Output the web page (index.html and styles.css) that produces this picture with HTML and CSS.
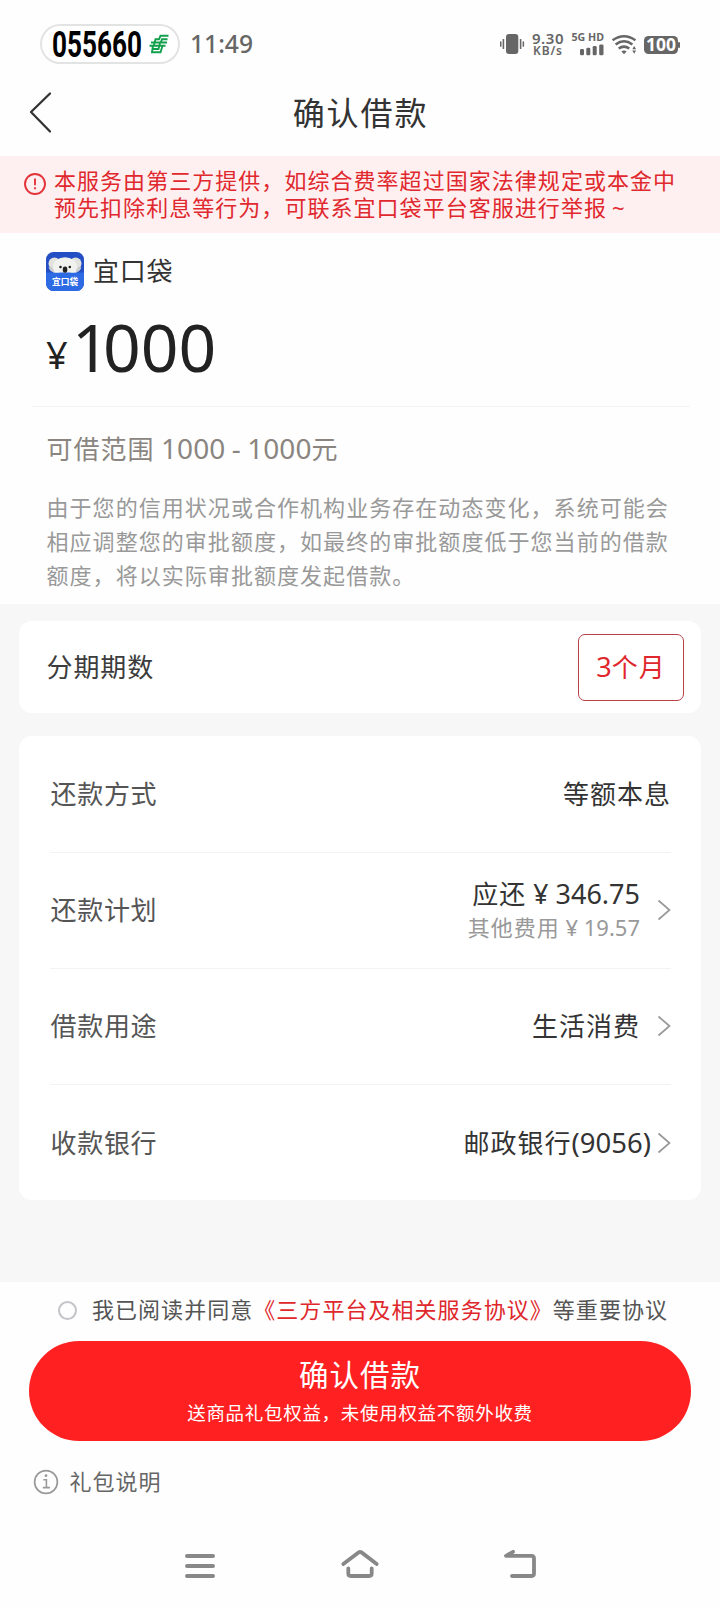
FILE: index.html
```html
<!DOCTYPE html>
<html lang="zh-CN">
<head>
<meta charset="utf-8">
<title>确认借款</title>
<link rel="stylesheet" href="styles.css">
</head>
<body>
<div class="screen">
  <header class="status">
    <div class="pill">
      <svg width="140" height="40" viewBox="0 0 140 40">
        <text class="pill-number" x="12" y="33" textLength="90" lengthAdjust="spacingAndGlyphs">055660</text>
        <g fill="none" stroke="#13a04c" stroke-width="1.900">
          <path d="M128.500 11.800H120.500L119 15.300H115.500L113.800 21.500"/>
          <path d="M127.500 15.300H122L120.800 18.500"/>
          <path d="M111 18.500H127M109.500 21.800H125.500"/>
          <path d="M113 21.500L112 28.200H120.500L122.500 22M113 25H118.500L120 19"/>
        </g>
      </svg>
    </div>
    <svg class="clock" width="64" height="40" viewBox="0 0 64 40"><text class="clock-text" x="0" y="29" textLength="63" lengthAdjust="spacingAndGlyphs">11:49</text></svg>
    <svg class="indicators" width="184" height="30" viewBox="498 29 184 30">
      <g fill="#666">
        <rect x="506" y="34" width="12.300" height="20" rx="3"/>
        <rect x="502.600" y="39" width="1.600" height="10" rx=".6"/><rect x="500" y="41.300" width="1.500" height="5.500" rx=".6"/>
        <rect x="519.800" y="39" width="1.600" height="10" rx=".6"/><rect x="522.600" y="41.300" width="1.500" height="5.500" rx=".6"/>
        <text class="speed" x="532" y="43.500" textLength="31.500">9.30</text>
        <text class="unit" x="533" y="55.300" textLength="29">KB/s</text>
        <text class="network" x="571.500" y="41.300" textLength="32.500" lengthAdjust="spacingAndGlyphs">5G HD</text>
        <rect x="580" y="49" width="4" height="6.200" rx="1.300"/><rect x="586.300" y="47.800" width="4" height="7.400" rx="1.300"/>
        <rect x="592.700" y="46" width="4" height="9.200" rx="1.300"/><rect x="599.200" y="44.400" width="4.300" height="10.800" rx="1.300"/>
        <path d="M621.300 51.300Q624 49.700 626.700 51.300L624 54.200Z"/>
        <path d="M632.300 49.200L634.200 46L636.100 49.200ZM632.300 50.600L634.200 53.800L636.100 50.600Z"/>
        <rect x="644" y="36" width="34" height="18" rx="4.500"/><rect x="678" y="42" width="2" height="6" rx="1"/>
      </g>
      <g fill="none" stroke="#666" stroke-width="2.500">
        <path d="M612.600 40.300Q624 32.300 635.400 40.300"/><path d="M615.600 44.400Q624 38.100 632.400 44.400"/><path d="M618.700 48.600Q624 44.700 629.300 48.600"/>
      </g>
      <text class="battery" x="646" y="51.200" textLength="30" lengthAdjust="spacingAndGlyphs">100</text>
    </svg>
  </header>

  <nav class="titlebar">
    <svg class="back" width="26" height="42" viewBox="0 0 26 42"><path d="M22 1.500L3 20L22 39.500" fill="none" stroke="#333" stroke-width="2.300" stroke-linecap="round" stroke-linejoin="round"/></svg>
    <h1 class="title">确认借款</h1>
  </nav>

  <div class="notice">
    <svg class="notice-icon" width="24" height="24" viewBox="0 0 24 24"><circle cx="12" cy="12" r="10" fill="none" stroke="#e3343a" stroke-width="1.900"/><path d="M12 6.500V13.200M12 15.300V17.300" stroke="#e3343a" stroke-width="1.900"/></svg>
    <p class="notice-text">本服务由第三方提供，如综合费率超过国家法律规定或本金中<br>预先扣除利息等行为，可联系宜口袋平台客服进行举报<span class="tilde">~</span></p>
  </div>

  <section class="loan">
    <div class="brand">
      <svg width="38" height="39" viewBox="0 0 38 39">
        <defs><clipPath id="tile"><rect width="38" height="39" rx="7.500"/></clipPath></defs>
        <g clip-path="url(#tile)">
          <rect width="38" height="39" fill="#244fc4"/>
          <g fill="#e2e2df"><circle cx="8.500" cy="11.500" r="6"/><circle cx="29.500" cy="11.500" r="6"/></g>
          <path d="M4 15Q6 20 10 18.500M34 15Q32 20 28 18.500" stroke="#c9cbd0" stroke-width="3" fill="none"/>
          <ellipse cx="19" cy="15" rx="12" ry="9.800" fill="#f1f1ee"/>
          <rect y="20.500" width="38" height="18.500" fill="#2d6be5"/>
          <path d="M7 20.600Q10 17.500 14 20.600ZM24 20.600Q28 17.500 31 20.600Z" fill="#f7f7f5"/>
          <circle cx="14.500" cy="15" r="1.300" fill="#222"/><circle cx="23.800" cy="15" r="1.300" fill="#222"/>
          <rect x="16.800" y="14.500" width="4.500" height="6.200" rx="2.200" fill="#222"/>
          <text class="tile-text" x="6" y="32.800">宜口袋</text>
        </g>
      </svg>
      <span class="brand-name">宜口袋</span>
    </div>
    <div class="amount"><span class="yen">¥</span><span class="one">1</span><span>000</span></div>
    <div class="rule"></div>
    <p class="range">可借范围<span class="latin"> 1000 - 1000</span>元</p>
    <p class="hint">由于您的信用状况或合作机构业务存在动态变化，系统可能会<br>相应调整您的审批额度，如最终的审批额度低于您当前的借款<br>额度，将以实际审批额度发起借款。</p>
  </section>

  <main class="details">
    <section class="card term">
      <span class="term-label">分期期数</span>
      <span class="term-option"><span class="latin">3</span>个月</span>
    </section>
    <section class="card rows">
      <div class="row"><span class="label">还款方式</span><span class="value">等额本息</span></div>
      <div class="row">
        <span class="label">还款计划</span>
        <div class="plan">
          <span class="value plan-main">应还<span class="latin"> <span class="cur">¥</span> 346.75</span></span>
          <span class="fee">其他费用<span class="fee-num"> <span class="fee-cur">¥</span> 19.57</span></span>
        </div>
        <svg class="chev" width="14" height="22" viewBox="0 0 14 22"><path d="M1.500 1.500L12.500 11L1.500 20.500" fill="none" stroke="#999" stroke-width="1.700"/></svg>
      </div>
      <div class="row"><span class="label">借款用途</span><span class="value">生活消费</span>
        <svg class="chev" width="14" height="22" viewBox="0 0 14 22"><path d="M1.500 1.500L12.500 11L1.500 20.500" fill="none" stroke="#999" stroke-width="1.700"/></svg>
      </div>
      <div class="row"><span class="label">收款银行</span><span class="value">邮政银行<span class="latin account">(9056)</span></span>
        <svg class="chev near" width="14" height="22" viewBox="0 0 14 22"><path d="M1.500 1.500L12.500 11L1.500 20.500" fill="none" stroke="#999" stroke-width="1.700"/></svg>
      </div>
    </section>
  </main>

  <footer class="footer">
    <div class="agree"><span class="radio"></span><span class="agree-text">我已阅读并同意<span class="link">《三方平台及相关服务协议》</span>等重要协议</span></div>
    <div class="submit"><span class="submit-main">确认借款</span><span class="submit-sub">送商品礼包权益，未使用权益不额外收费</span></div>
    <div class="gift">
      <svg width="26" height="26" viewBox="0 0 26 26"><circle cx="13" cy="13" r="11.400" fill="none" stroke="#999" stroke-width="1.700"/><path d="M10.300 10.800H13.400V18.300M9.800 18.600H17" fill="none" stroke="#999" stroke-width="1.600"/><circle cx="13" cy="6.700" r="1.400" fill="#999"/></svg>
      <span class="gift-text">礼包说明</span>
    </div>
  </footer>

  <div class="sysnav">
    <svg width="38" height="34" viewBox="181 1549 38 34"><path d="M187 1556H213M187 1566H213M187 1576H213" stroke="#888" stroke-width="4" stroke-linecap="round"/></svg>
    <svg width="38" height="34" viewBox="341 1549 38 34"><path d="M343.300 1564L358.500 1552.400Q360 1551.300 361.500 1552.400L376.700 1564M348.300 1568.500V1573.500Q348.300 1576 350.800 1576H369.200Q371.700 1576 371.700 1573.500V1568.500" fill="none" stroke="#888" stroke-width="3.800" stroke-linecap="round"/></svg>
    <svg width="38" height="34" viewBox="501 1549 38 34"><path d="M513 1551.800L506 1555.800H531.500Q534 1555.800 534 1558.500V1573.500Q534 1576 531.500 1576H512" fill="none" stroke="#888" stroke-width="3.800" stroke-linecap="round" stroke-linejoin="round"/></svg>
  </div>
</div>
</body>
</html>
```
FILE: styles.css
```css
* { box-sizing: border-box; margin: 0; padding: 0; }
body { background: #fefefe; font-family: "Noto Sans", "Noto Sans CJK SC", sans-serif; color: #333; }
svg { display: block; flex: none; overflow: visible; }
.screen { width: 720px; height: 1608px; display: flex; flex-direction: column; overflow: hidden; white-space: nowrap; }
.latin { letter-spacing: 0; font-size: 27px; white-space: pre; }

.status { height: 74px; display: flex; align-items: center; padding: 14px 38px 0 40px; }
.pill { width: 140px; height: 40px; border-radius: 20px; box-shadow: inset 0 0 0 2px #e2e4e3; background: #fff; }
.pill-number { font: 700 36px Roboto, sans-serif; fill: #000; }
.clock { margin-left: 10px; }
.clock-text { font: 500 25px "Noto Sans", sans-serif; fill: #666; }
.indicators { margin-left: auto; }
.speed { font: 600 15px "Noto Sans", sans-serif; }
.unit { font: 600 12px "Noto Sans", sans-serif; }
.network { font: 700 11px "Noto Sans", sans-serif; }
.battery { font: 700 17px "Noto Sans", sans-serif; fill: #fff; }

.titlebar { height: 82px; display: grid; grid-template-columns: 60px 1fr 60px; align-items: center; padding-bottom: 4px; }
.back { margin-left: 28px; }
.title { font-size: 32px; font-weight: 400; letter-spacing: 1.900px; line-height: 40px; text-align: center; padding-left: 1px; }

.notice { height: 77px; background: #fef0f0; display: flex; padding: 11px 0 0 22.500px; color: #e0282e; }
.notice-icon { margin-top: 4.500px; }
.notice-text { font-size: 22px; letter-spacing: 1.040px; line-height: 27px; margin-left: 7.500px; }
.tilde { margin-left: 5px; }

.loan { height: 371px; padding: 19px 0 0; display: flex; flex-direction: column; }
.brand { height: 39px; display: flex; align-items: center; padding-left: 46px; }
.brand-name { font-size: 26px; letter-spacing: .800px; line-height: 36px; padding-bottom: 2px; margin-left: 9px; }
.tile-text { font: 700 8.700px "Noto Sans CJK SC", sans-serif; fill: #fff; }
.amount { height: 115px; padding: 5px 0 0 46px; font-size: 66px; line-height: 100px; color: #222; }
.yen { font-size: 38px; line-height: 60px; display: inline-block; width: 26px; position: relative; top: -3px; }
.one { display: inline-block; width: 31px; }
.rule { height: 1px; background: #f3f3f3; margin: 0 30px 0 32px; }
.range { font-size: 26px; letter-spacing: 1px; line-height: 40px; padding-left: 46.500px; margin-top: 21px; color: #8a8580; }
.range .latin { font-size: 28px; word-spacing: -.700px; }
.hint { font-size: 22px; letter-spacing: 1.050px; line-height: 34px; padding-left: 46.500px; margin-top: 21px; color: #999; }

.details { height: 678px; background: #f7f7f7; padding: 17px 19px 0; }
.card { background: #fff; border-radius: 13px; }
.term { height: 92px; display: flex; align-items: center; justify-content: space-between; padding: 0 17px 0 27.500px; }
.term-label { font-size: 26px; letter-spacing: .900px; padding-bottom: 2px; color: #3c3c3c; }
.term-option { width: 106px; height: 67px; border: 1px solid #b8414a; border-radius: 7px; display: flex; align-items: center; justify-content: center; font-size: 26px; letter-spacing: 1px; color: #df272c; padding-bottom: 2px; }
.rows { height: 464px; margin-top: 23px; padding: 1px 30px 0 31px; }
.row { height: 116px; border-bottom: 1px solid #f3f3f3; display: flex; align-items: center; font-size: 26px; letter-spacing: 1px; line-height: 36px; padding-bottom: 2px; }
.row:last-child { border-bottom: 0; padding-bottom: 0; }
.label { color: #555; margin-left: .500px; margin-right: auto; letter-spacing: .700px; }
.plan { display: flex; flex-direction: column; align-items: flex-end; }
.plan-main { line-height: 34px; }
.cur { font-size: 26.500px; }
.fee { font-size: 22px; line-height: 32px; color: #999; }
.fee-num { letter-spacing: 0; white-space: pre; }
.fee-cur { font-size: 22px; }
.account { font-size: 27.500px; }
.chev { margin-left: 17px; }
.near { margin-left: 6px; }

.footer { height: 240px; display: flex; flex-direction: column; }
.agree { height: 59px; display: flex; align-items: center; padding: 0 0 3px 58px; font-size: 22px; letter-spacing: 1.040px; color: #555; }
.radio { width: 19px; height: 19px; border: 2px solid #c4c4c8; border-radius: 50%; }
.agree-text { margin-left: 15px; padding-bottom: 4px; }
.link { color: #df272c; }
.submit { height: 100px; margin: 0 29px; border-radius: 50px; background: #ff2122; color: #fff; display: flex; flex-direction: column; align-items: center; padding-top: 14px; }
.submit-main { font-size: 29.500px; letter-spacing: 1px; line-height: 40px; }
.submit-sub { font-size: 18.500px; letter-spacing: .700px; line-height: 36px; }
.gift { height: 81px; display: flex; align-items: center; padding-left: 33px; color: #666; }
.gift-text { font-size: 22px; letter-spacing: 1.040px; margin-left: 10.500px; padding-bottom: 3px; }

.sysnav { height: 86px; display: grid; grid-template-columns: 38px 38px 38px; gap: 122px; justify-content: center; padding-top: 27px; }
```
